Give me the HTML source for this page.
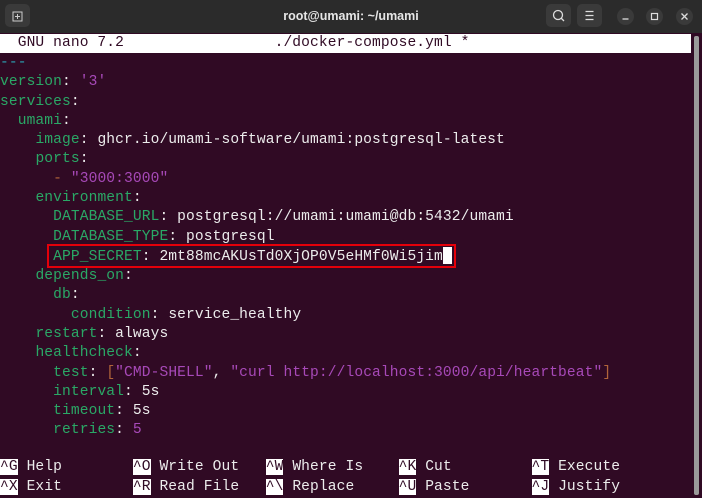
<!DOCTYPE html>
<html><head><meta charset="utf-8"><style>
body{margin:0;width:702px;height:498px;overflow:hidden;background:#300a24;font-family:"Liberation Mono",monospace;position:relative}
.tb{position:absolute;left:0;top:0;width:702px;height:33px;background:#2b2b2b;color:#e6e6e6;font-family:"Liberation Sans",sans-serif;font-size:13px}
.tb .t{position:absolute;left:0;right:0;top:9px;text-align:center;font-weight:bold;font-size:12.5px}
.btn{position:absolute;top:4px;width:25px;height:23px;background:#3a3a3a;border-radius:5px}
.circ{position:absolute;top:8px;width:17px;height:17px;border-radius:50%;background:#3a3a3a;color:#ddd;font-size:11px;text-align:center;line-height:17px}
.hdr{position:absolute;left:0;top:34px;width:691px;height:19px;background:#fff;color:#300a24;font-size:14.6px;line-height:19px;white-space:pre;letter-spacing:0.1px}
.sb{position:absolute;left:694px;top:36px;width:5px;height:459px;background:#9a9a9a;border-radius:2px}
.code{position:absolute;left:0;top:54px;font-size:14.6px;line-height:19.28px;white-space:pre;color:#ececec;letter-spacing:0.1px}
.k{color:#2aa866}.s{color:#a749b8}.c{color:#2aa1b3}.o{color:#b0643a}
.box{position:absolute;left:47px;top:244px;width:409px;height:24px;border:2px solid #e5000a;box-sizing:border-box}
.cur{display:inline-block;width:9px;height:17px;background:#fff;vertical-align:-4px}
.bot{position:absolute;left:0;top:457px;font-size:14.6px;line-height:20px;white-space:pre;color:#ececec;letter-spacing:0.1px}
.kk{background:#fff;color:#300a24}
</style></head><body>
<div class="tb">
<div class="btn" style="left:5px;top:4px"><svg width="25" height="23"><path d="M8 8h9v9h-9z M8 8v9" stroke="#ccc" fill="none" stroke-width="1"/><path d="M12.5 10v5M10 12.5h5" stroke="#ccc"/></svg></div>
<div class="t">root@umami: ~/umami</div>
<div class="btn" style="left:546px"><svg width="25" height="23"><circle cx="12" cy="11" r="4.5" stroke="#ddd" fill="none" stroke-width="1.3"/><path d="M15 14l3 3" stroke="#ddd" stroke-width="1.3"/></svg></div>
<div class="btn" style="left:577px"><svg width="25" height="23"><path d="M8.5 7.5h8M8.5 11.5h8M8.5 15.5h8" stroke="#ddd" stroke-width="1.2"/></svg></div>
<div class="circ" style="left:617px"><svg width="17" height="17"><path d="M5.5 11h6" stroke="#ddd" stroke-width="1.3"/></svg></div>
<div class="circ" style="left:646px"><svg width="17" height="17"><rect x="5.5" y="5.5" width="6" height="6" stroke="#ddd" fill="none" stroke-width="1.2"/></svg></div>
<div class="circ" style="left:676px"><svg width="17" height="17"><path d="M5.5 5.5l6 6M11.5 5.5l-6 6" stroke="#ddd" stroke-width="1.3"/></svg></div>
</div>
<div class="hdr">  GNU nano 7.2                 ./docker-compose.yml *</div>
<div class="sb"></div>
<div class="code"><span class="c">---</span>
<span class="k">version</span>: <span class="s">'3'</span>
<span class="k">services</span>:
  <span class="k">umami</span>:
    <span class="k">image</span>: ghcr.io/umami-software/umami:postgresql-latest
    <span class="k">ports</span>:
      <span class="o">-</span> <span class="s">"3000:3000"</span>
    <span class="k">environment</span>:
      <span class="k">DATABASE_URL</span>: postgresql://umami:umami@db:5432/umami
      <span class="k">DATABASE_TYPE</span>: postgresql
      <span class="k">APP_SECRET</span>: 2mt88mcAKUsTd0XjOP0V5eHMf0Wi5jim<span class="cur"></span>
    <span class="k">depends_on</span>:
      <span class="k">db</span>:
        <span class="k">condition</span>: service_healthy
    <span class="k">restart</span>: always
    <span class="k">healthcheck</span>:
      <span class="k">test</span>: <span class="o">[</span><span class="s">"CMD-SHELL"</span>, <span class="s">"curl http://localhost:3000/api/heartbeat"</span><span class="o">]</span>
      <span class="k">interval</span>: 5s
      <span class="k">timeout</span>: 5s
      <span class="k">retries</span>: <span class="s">5</span></div>
<div class="box"></div>
<div class="bot"><span class="kk">^G</span> Help        <span class="kk">^O</span> Write Out   <span class="kk">^W</span> Where Is    <span class="kk">^K</span> Cut         <span class="kk">^T</span> Execute
<span class="kk">^X</span> Exit        <span class="kk">^R</span> Read File   <span class="kk">^\</span> Replace     <span class="kk">^U</span> Paste       <span class="kk">^J</span> Justify</div>
</body></html>
